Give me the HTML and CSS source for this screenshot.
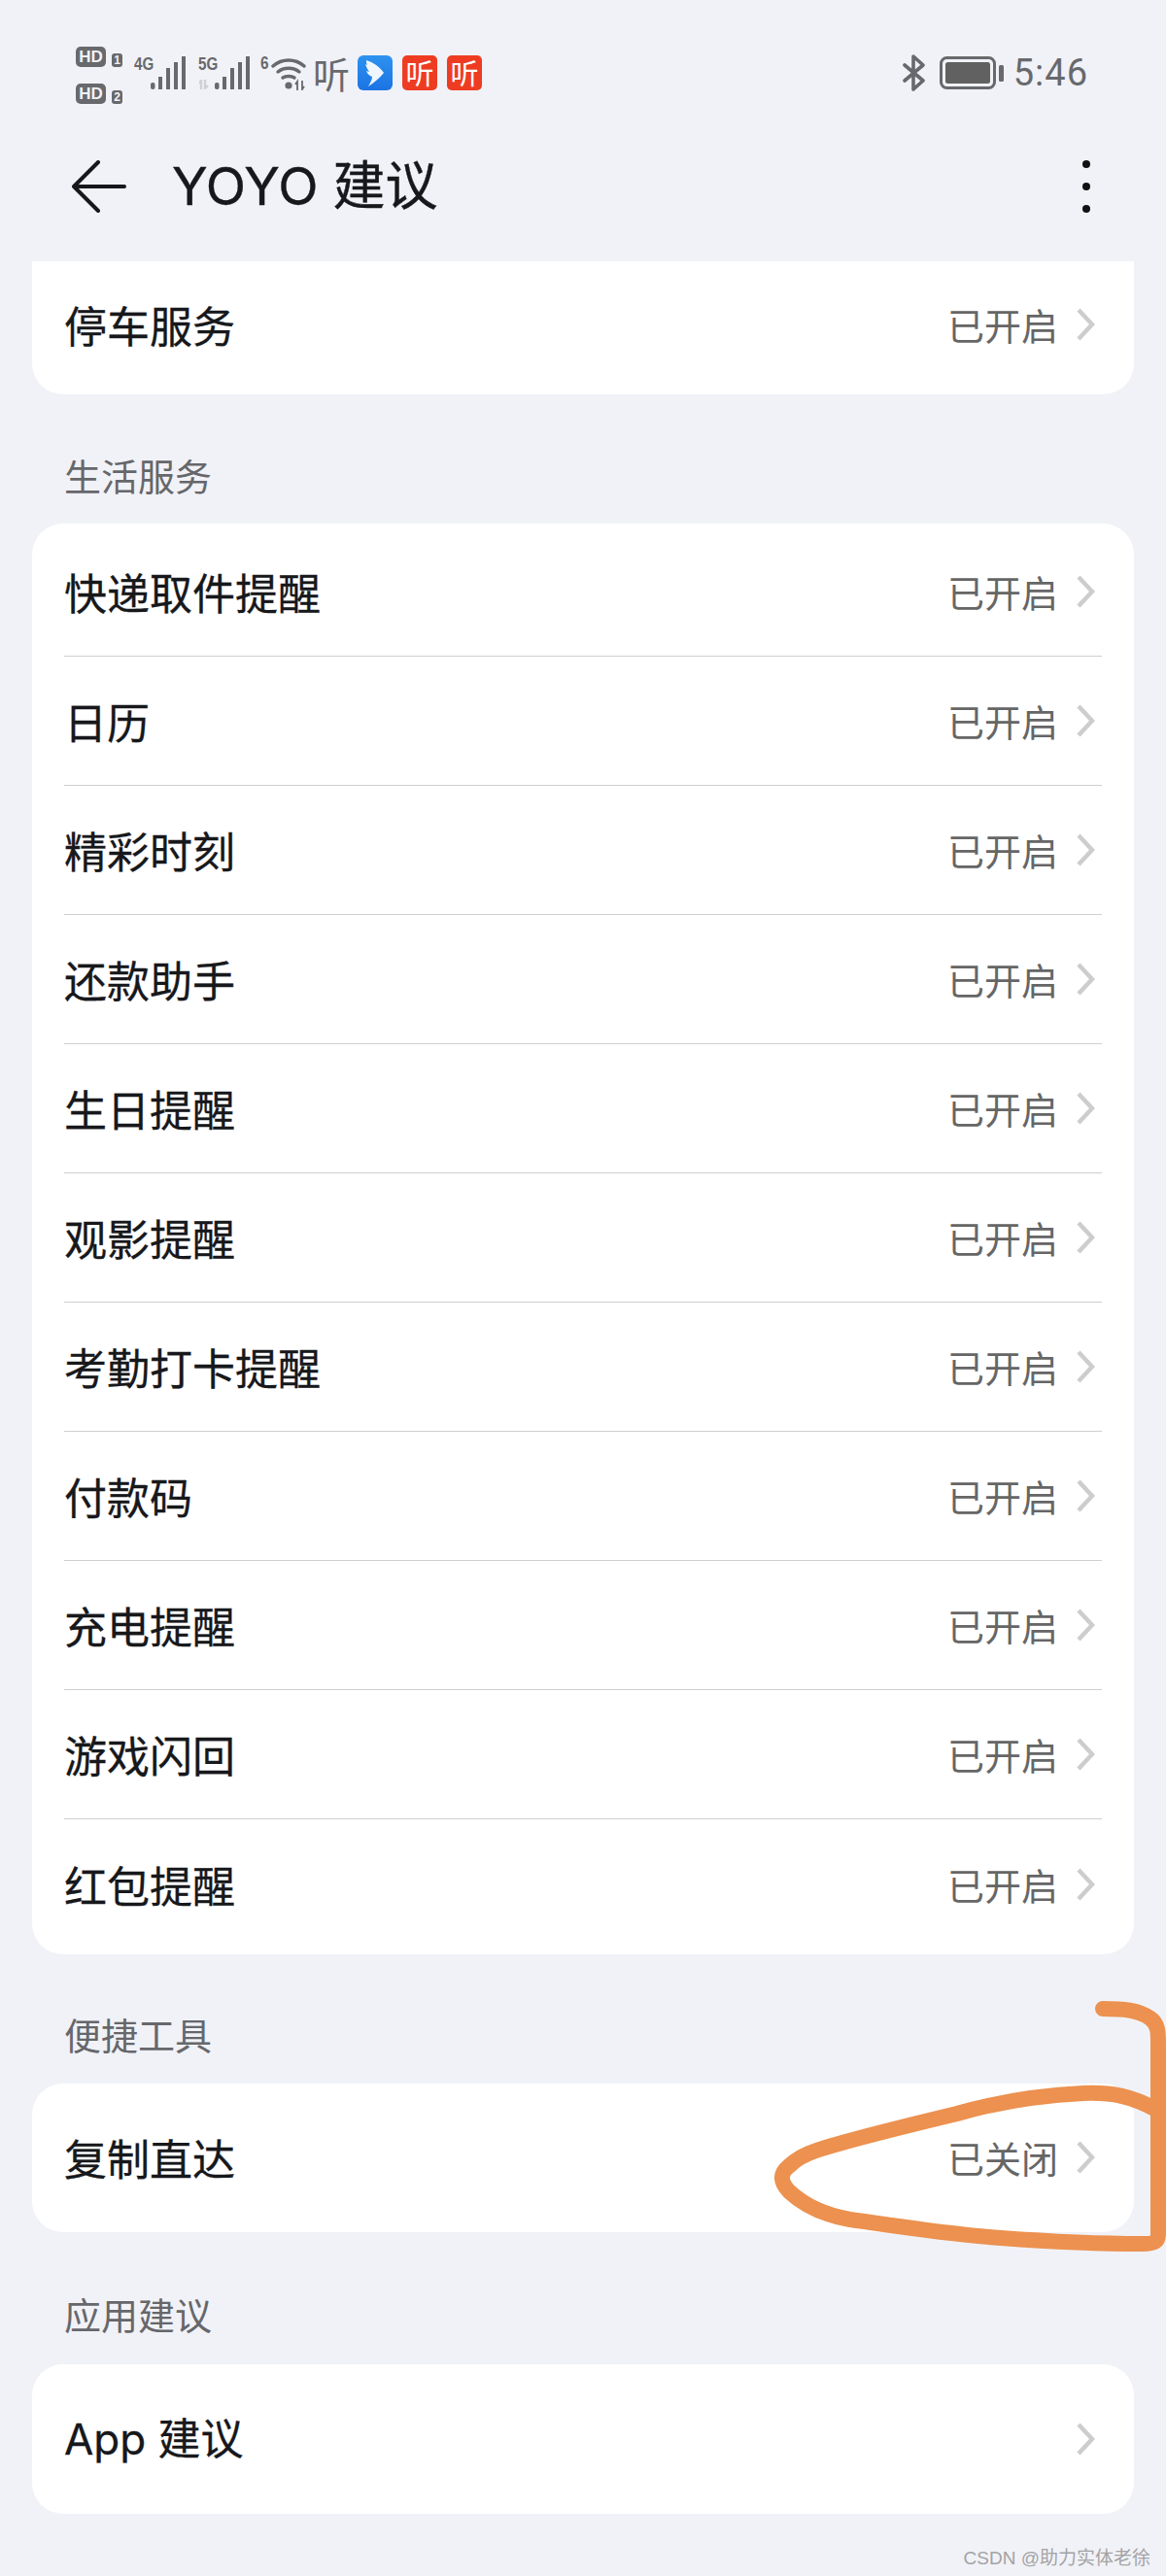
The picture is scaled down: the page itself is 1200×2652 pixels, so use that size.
FILE: index.html
```html
<!DOCTYPE html>
<html lang="zh-CN">
<head>
<meta charset="utf-8">
<title>YOYO 建议</title>
<link rel="stylesheet" href="styles.css">
</head>
<body>
<div class="page">
  <div class="status">
    <div class="status-left">
      <div class="hd-group">
        <div class="hd-line"><span class="hd">HD</span><span class="sim">1</span></div>
        <div class="hd-line"><span class="hd">HD</span><span class="sim">2</span></div>
      </div>
      <div class="net net-4g">
        <span class="net-label">4G</span>
        <svg class="bars" viewBox="0 0 37 34"><rect x="0" y="27" width="4.5" height="7" rx="2"/><rect x="8" y="21" width="4" height="13"/><rect x="16" y="12" width="4" height="22"/><rect x="24" y="6" width="4" height="28"/><rect x="32" y="0" width="4" height="34"/></svg>
      </div>
      <div class="net net-5g">
        <span class="net-label">5G</span>
        <svg class="arrows" viewBox="0 0 16 10"><path d="M2 10V1L0 4M6 0v9l3-3" fill="none" stroke="#cfd0d3" stroke-width="2.4"/></svg>
        <svg class="bars" viewBox="0 0 37 34"><rect x="0" y="27" width="4.5" height="7" rx="2"/><rect x="8" y="21" width="4" height="13"/><rect x="16" y="12" width="4" height="22"/><rect x="24" y="6" width="4" height="28"/><rect x="32" y="0" width="4" height="34"/></svg>
      </div>
      <div class="wifi-wrap">
        <span class="wifi-six">6</span>
        <svg class="wifi" viewBox="0 0 36 36"><g fill="none" stroke="#68696c" stroke-width="3.4" stroke-linecap="round"><path d="M2 11C11 3 25 3 34 11"/><path d="M7 17C13 12 23 12 29 17"/><path d="M12 23C15 21 21 21 24 23"/></g><circle cx="18" cy="31" r="3.6" fill="#68696c"/><path d="M27 36V27l-2 3M32 26v9l2-3" fill="none" stroke="#68696c" stroke-width="1.8"/></svg>
      </div>
      <span class="ting">听</span>
      <svg class="app-blue" viewBox="0 0 36 36"><defs><linearGradient id="blue" x1="0" y1="0" x2="0" y2="1"><stop offset="0" stop-color="#2d93f0"/><stop offset="1" stop-color="#1c73e4"/></linearGradient></defs><rect width="36" height="36" rx="6" fill="url(#blue)"/><path d="M9 5C16 7 23 12 27 18C22 24 17 28 11 32C13 28 15 25 15 22C12 21 10 19 9 16L12 17C10 14 9 12 8 9L10 10C9 8 9 7 9 5Z" fill="#fff" opacity=".93"/></svg>
      <span class="app-red">听</span>
      <span class="app-red">听</span>
    </div>
    <div class="status-right">
      <svg class="bt" viewBox="0 0 24 38"><path d="M2 11L21 27L11 36V2L21 11L2 27" fill="none" stroke="#68696c" stroke-width="3.6" stroke-linejoin="round" stroke-linecap="round"/></svg>
      <svg class="battery" viewBox="0 0 66 34"><rect x="1.5" y="1.5" width="55" height="31" rx="6" fill="none" stroke="#68696c" stroke-width="3"/><rect x="6" y="6" width="46" height="22" rx="2.5" fill="#616161"/><rect x="61" y="9" width="5" height="17" rx="1.5" fill="#68696c"/></svg>
      <span class="time">5:46</span>
    </div>
  </div>

  <header class="titlebar">
    <svg class="back" viewBox="0 0 56 54"><path d="M27 2L2 27L27 52M2 27H54" fill="none" stroke="#17181b" stroke-width="4" stroke-linecap="round" stroke-linejoin="round"/></svg>
    <h1 class="title">YOYO 建议</h1>
    <div class="more"><i></i><i></i><i></i></div>
  </header>

  <section class="card card-clip">
    <div class="row row-parking"><span class="name">停车服务</span><span class="state">已开启</span><svg class="chev" viewBox="0 0 20 36"><path d="M3 3L17 18L3 33"/></svg></div>
  </section>

  <h2 class="section">生活服务</h2>
  <section class="card card-list">
    <div class="row"><span class="name">快递取件提醒</span><span class="state">已开启</span><svg class="chev" viewBox="0 0 20 36"><path d="M3 3L17 18L3 33"/></svg></div>
    <div class="row"><span class="name">日历</span><span class="state">已开启</span><svg class="chev" viewBox="0 0 20 36"><path d="M3 3L17 18L3 33"/></svg></div>
    <div class="row"><span class="name">精彩时刻</span><span class="state">已开启</span><svg class="chev" viewBox="0 0 20 36"><path d="M3 3L17 18L3 33"/></svg></div>
    <div class="row"><span class="name">还款助手</span><span class="state">已开启</span><svg class="chev" viewBox="0 0 20 36"><path d="M3 3L17 18L3 33"/></svg></div>
    <div class="row"><span class="name">生日提醒</span><span class="state">已开启</span><svg class="chev" viewBox="0 0 20 36"><path d="M3 3L17 18L3 33"/></svg></div>
    <div class="row"><span class="name">观影提醒</span><span class="state">已开启</span><svg class="chev" viewBox="0 0 20 36"><path d="M3 3L17 18L3 33"/></svg></div>
    <div class="row"><span class="name">考勤打卡提醒</span><span class="state">已开启</span><svg class="chev" viewBox="0 0 20 36"><path d="M3 3L17 18L3 33"/></svg></div>
    <div class="row"><span class="name">付款码</span><span class="state">已开启</span><svg class="chev" viewBox="0 0 20 36"><path d="M3 3L17 18L3 33"/></svg></div>
    <div class="row"><span class="name">充电提醒</span><span class="state">已开启</span><svg class="chev" viewBox="0 0 20 36"><path d="M3 3L17 18L3 33"/></svg></div>
    <div class="row"><span class="name">游戏闪回</span><span class="state">已开启</span><svg class="chev" viewBox="0 0 20 36"><path d="M3 3L17 18L3 33"/></svg></div>
    <div class="row"><span class="name">红包提醒</span><span class="state">已开启</span><svg class="chev" viewBox="0 0 20 36"><path d="M3 3L17 18L3 33"/></svg></div>
  </section>

  <h2 class="section section-tools">便捷工具</h2>
  <section class="card">
    <div class="row row-single"><span class="name">复制直达</span><span class="state">已关闭</span><svg class="chev" viewBox="0 0 20 36"><path d="M3 3L17 18L3 33"/></svg></div>
  </section>

  <h2 class="section section-apps">应用建议</h2>
  <section class="card">
    <div class="row row-app"><span class="name">App 建议</span><svg class="chev" viewBox="0 0 20 36"><path d="M3 3L17 18L3 33"/></svg></div>
  </section>

  <svg class="scribble" viewBox="0 0 1200 2652" aria-hidden="true"><path d="M1135 2068C1155 2068 1172 2069 1184 2078C1192 2084 1192 2092 1192 2104V2300C1192 2308 1188 2310 1176 2310C1130 2310 1085 2308 1030 2304C975 2300 925 2292 875 2285C845 2280 825 2268 812 2256C803 2246 802 2238 812 2230C820 2222 828 2218 840 2214C870 2204 910 2194 985 2176C1030 2163 1075 2157 1115 2155C1145 2154 1165 2158 1190 2172" fill="none" stroke="#ec914f" stroke-width="16" stroke-linecap="round" stroke-linejoin="round"/></svg>
  <div class="watermark">CSDN @助力实体老徐</div>
</div>
</body>
</html>
```

FILE: styles.css
```css
* { box-sizing: border-box; }
html, body { margin: 0; padding: 0; }
body {
  background: #f1f2f7;
  font-family: "Noto Sans CJK SC", "Noto Sans", sans-serif;
  color: #17181b;
}
.page {
  position: relative;
  width: 1200px;
  height: 2652px;
  padding: 0 33px;
  overflow: hidden;
}

/* status bar */
.status {
  display: flex;
  justify-content: space-between;
  align-items: center;
  height: 74px;
  margin: 38px -33px 0;
  padding: 0 80px 0 78px;
  color: #68696c;
}
.status-left, .status-right { display: flex; align-items: center; }
.hd-group { display: flex; flex-direction: column; gap: 17px; margin-top: 4px; }
.hd-line { display: flex; align-items: flex-end; gap: 6px; height: 21px; }
.hd {
  width: 31px;
  height: 21px;
  border-radius: 5px;
  background: #68696c;
  color: #f1f2f7;
  font: 700 17px/21px "Liberation Sans", sans-serif;
  text-align: center;
}
.sim {
  width: 11px;
  height: 14px;
  border-radius: 3px;
  background: #68696c;
  color: #f1f2f7;
  font: 700 12px/14px "Liberation Sans", sans-serif;
  text-align: center;
}
.net { position: relative; display: flex; align-items: flex-end; height: 36px; }
.net-4g { width: 54px; margin-left: 12px; }
.net-5g { width: 54px; margin-left: 12px; }
.net-label {
  position: absolute;
  left: 0;
  top: 0;
  font: 700 19px/18px "Liberation Sans", sans-serif;
  transform: scaleX(.8);
  transform-origin: left top;
}
.bars { position: absolute; right: 0; bottom: 1px; width: 37px; height: 34px; fill: #68696c; }
.arrows { position: absolute; left: 1px; bottom: 1px; width: 16px; height: 10px; }
.wifi-wrap { position: relative; width: 47px; height: 36px; margin-left: 10px; }
.wifi-six {
  position: absolute;
  left: 0;
  top: -1px;
  font: 700 18px/18px "Liberation Sans", sans-serif;
  transform: scaleX(.85);
  transform-origin: left top;
}
.wifi { position: absolute; right: 0; top: 0; width: 36px; height: 36px; }
.ting {
  width: 38px;
  margin-left: 7px;
  font-size: 38px;
  line-height: 40px;
  color: #68696c;
}
.app-blue { width: 36px; height: 36px; margin-left: 8px; }
.app-red {
  width: 36px;
  height: 36px;
  margin-left: 10px;
  border-radius: 5px;
  background: #ee3c22;
  color: #fff;
  font-size: 29px;
  line-height: 35px;
  text-align: center;
}
.bt { width: 24px; height: 38px; }
.battery { width: 66px; height: 34px; margin-left: 14px; }
.time {
  margin-left: 10px;
  font: 400 38px/40px "Roboto", sans-serif;
  letter-spacing: 1px;
  color: #68696c;
}

/* title bar */
.titlebar {
  display: flex;
  align-items: center;
  height: 92px;
  margin-top: 34px;
  margin-left: 41px;
  margin-right: 8px;
}
.back { width: 56px; height: 54px; flex: none; }
.title {
  flex: 1;
  margin: 0 0 0 47px;
  font-family: "Inter", "Noto Sans CJK SC", sans-serif;
  font-size: 54px;
  font-weight: 400;
  line-height: 60px;
  -webkit-text-stroke: .4px #17181b;
}
.more { display: flex; flex-direction: column; gap: 15px; margin-right: 37px; }
.more i { display: block; width: 8px; height: 8px; border-radius: 50%; background: #111; }

/* cards */
.card {
  background: #fff;
  border-radius: 32px;
}
.card-clip {
  margin-top: 31px;
  border-radius: 0 0 32px 32px;
}
.card-list { padding: 4px 0 6px; }
.row {
  display: flex;
  align-items: center;
  height: 133px;
  margin: 0 33px;
  border-bottom: 1px solid #cfcfd1;
}
.row:last-child { border-bottom: 0; }
.row-parking { height: 137px; padding-bottom: 8px; }
.row-single { height: 153px; padding-bottom: 2px; }
.row-app { height: 154px; justify-content: space-between; }
.name {
  flex: 1;
  font-size: 44px;
  line-height: 60px;
  color: #17181b;
  -webkit-text-stroke: .3px #17181b;
}
.row-app .name { font-family: "Inter", "Noto Sans CJK SC", sans-serif; }
.state {
  font-size: 38px;
  line-height: 50px;
  color: #666;
}
.chev {
  width: 20px;
  height: 36px;
  margin-left: 18px;
  margin-right: 7px;
  flex: none;
}
.chev path { fill: none; stroke: #cdcdcd; stroke-width: 4.5; }

/* section headings */
.section {
  margin: 57px 33px 25px;
  font-size: 38px;
  font-weight: 400;
  line-height: 51px;
  color: #66676b;
}
.section-tools { margin-top: 56px; margin-bottom: 26px; }
.section-apps { margin-top: 58px; margin-bottom: 27px; }

/* overlays */
.scribble {
  position: absolute;
  left: 0;
  top: 0;
  width: 1200px;
  height: 2652px;
  pointer-events: none;
}
.watermark {
  position: absolute;
  right: 16px;
  top: 2622px;
  font: 400 19px/24px "Liberation Sans", "Noto Sans CJK SC", sans-serif;
  color: #a3a3a5;
}
```
